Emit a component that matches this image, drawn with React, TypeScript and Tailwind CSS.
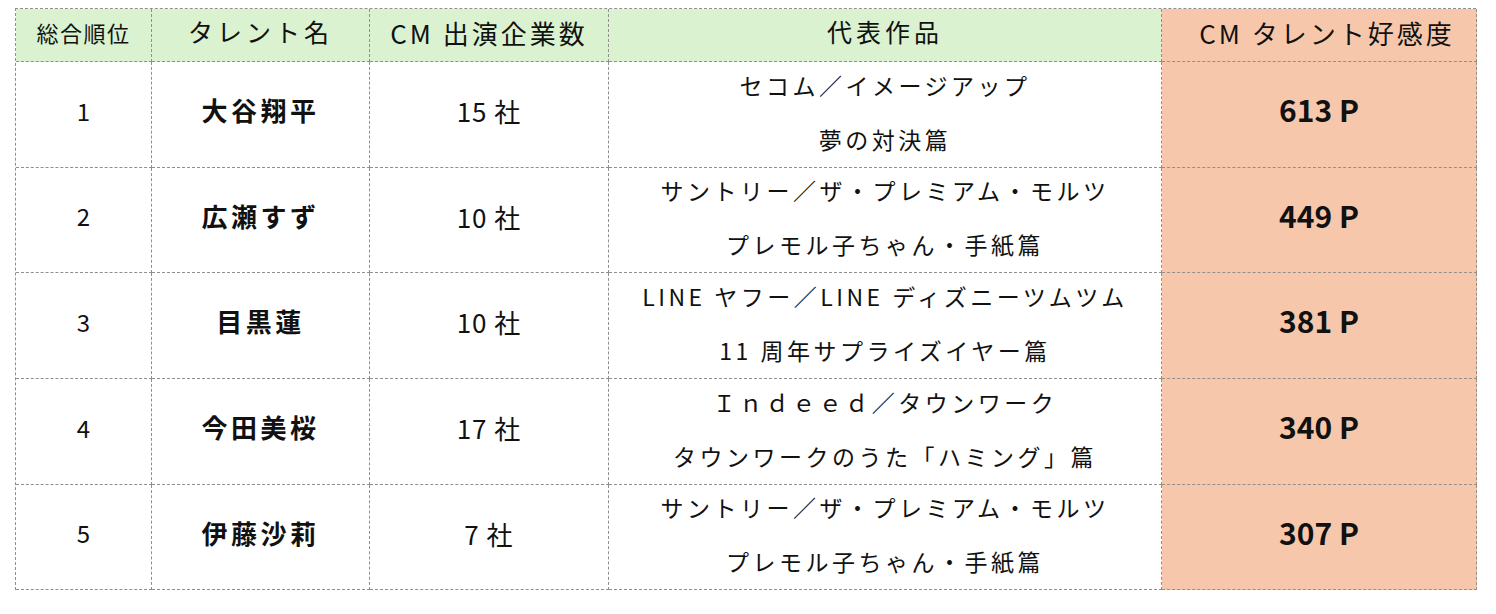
import React from "react";

const rows = [
  { rank: "1", name: "大谷翔平", count: "15 社", w1: "セコム／イメージアップ", w2: "夢の対決篇", pt: "613 P" },
  { rank: "2", name: "広瀬すず", count: "10 社", w1: "サントリー／ザ・プレミアム・モルツ", w2: "プレモル子ちゃん・手紙篇", pt: "449 P" },
  { rank: "3", name: "目黒蓮", count: "10 社", w1: "LINE ヤフー／LINE ディズニーツムツム", w2: "11 周年サプライズイヤー篇", pt: "381 P" },
  { rank: "4", name: "今田美桜", count: "17 社", w1: "Ｉｎｄｅｅｄ／タウンワーク", w2: "タウンワークのうた「ハミング」篇", pt: "340 P" },
  { rank: "5", name: "伊藤沙莉", count: "7 社", w1: "サントリー／ザ・プレミアム・モルツ", w2: "プレモル子ちゃん・手紙篇", pt: "307 P" },
];

const cell = "border-r border-b border-dashed border-[#8f8f8f] flex items-center justify-center";

export default function App() {
  return (
    <div
      className="w-[1496px] h-[614px] bg-white pl-[15px] pt-[8px] text-[#111]"
      style={{ fontFamily: '"Noto Sans CJK JP", "Noto Sans", sans-serif' }}
    >
      <div className="grid grid-cols-[136px_218px_239px_553px_315px] grid-rows-[53px_106px_105px_106px_106px_105px] w-[1461px] border-l border-t border-dashed border-[#8f8f8f]">
        <div className={`${cell} bg-[#daf2d0] text-[22px] tracking-[1.5px] pb-[6px]`}>総合順位</div>
        <div className={`${cell} bg-[#daf2d0] text-[25px] tracking-[4px] pb-[6px]`}>タレント名</div>
        <div className={`${cell} bg-[#daf2d0] text-[26px] tracking-[3px] pb-[6px]`}>CM 出演企業数</div>
        <div className={`${cell} bg-[#daf2d0] text-[25px] tracking-[4px] pb-[6px]`}>代表作品</div>
        <div className={`${cell} bg-[#f7c7ac] text-[26px] tracking-[3px] pl-[16px] pb-[6px]`}>CM タレント好感度</div>
        {rows.map((r) => (
          <React.Fragment key={r.rank}>
            <div className={`${cell} text-[24px] pb-[8px]`}>{r.rank}</div>
            <div className={`${cell} text-[26px] font-bold tracking-[3.5px] pb-[10px]`}>{r.name}</div>
            <div className={`${cell} text-[26px] tracking-[1px] pb-[8px]`}>{r.count}</div>
            <div className={`${cell} flex-col text-[23px] tracking-[3.5px] leading-[54px] pb-[6px]`}>
              <div>{r.w1}</div>
              <div>{r.w2}</div>
            </div>
            <div className={`${cell} bg-[#f7c7ac] text-[30px] font-bold pb-[10px]`}>{r.pt}</div>
          </React.Fragment>
        ))}
      </div>
    </div>
  );
}
